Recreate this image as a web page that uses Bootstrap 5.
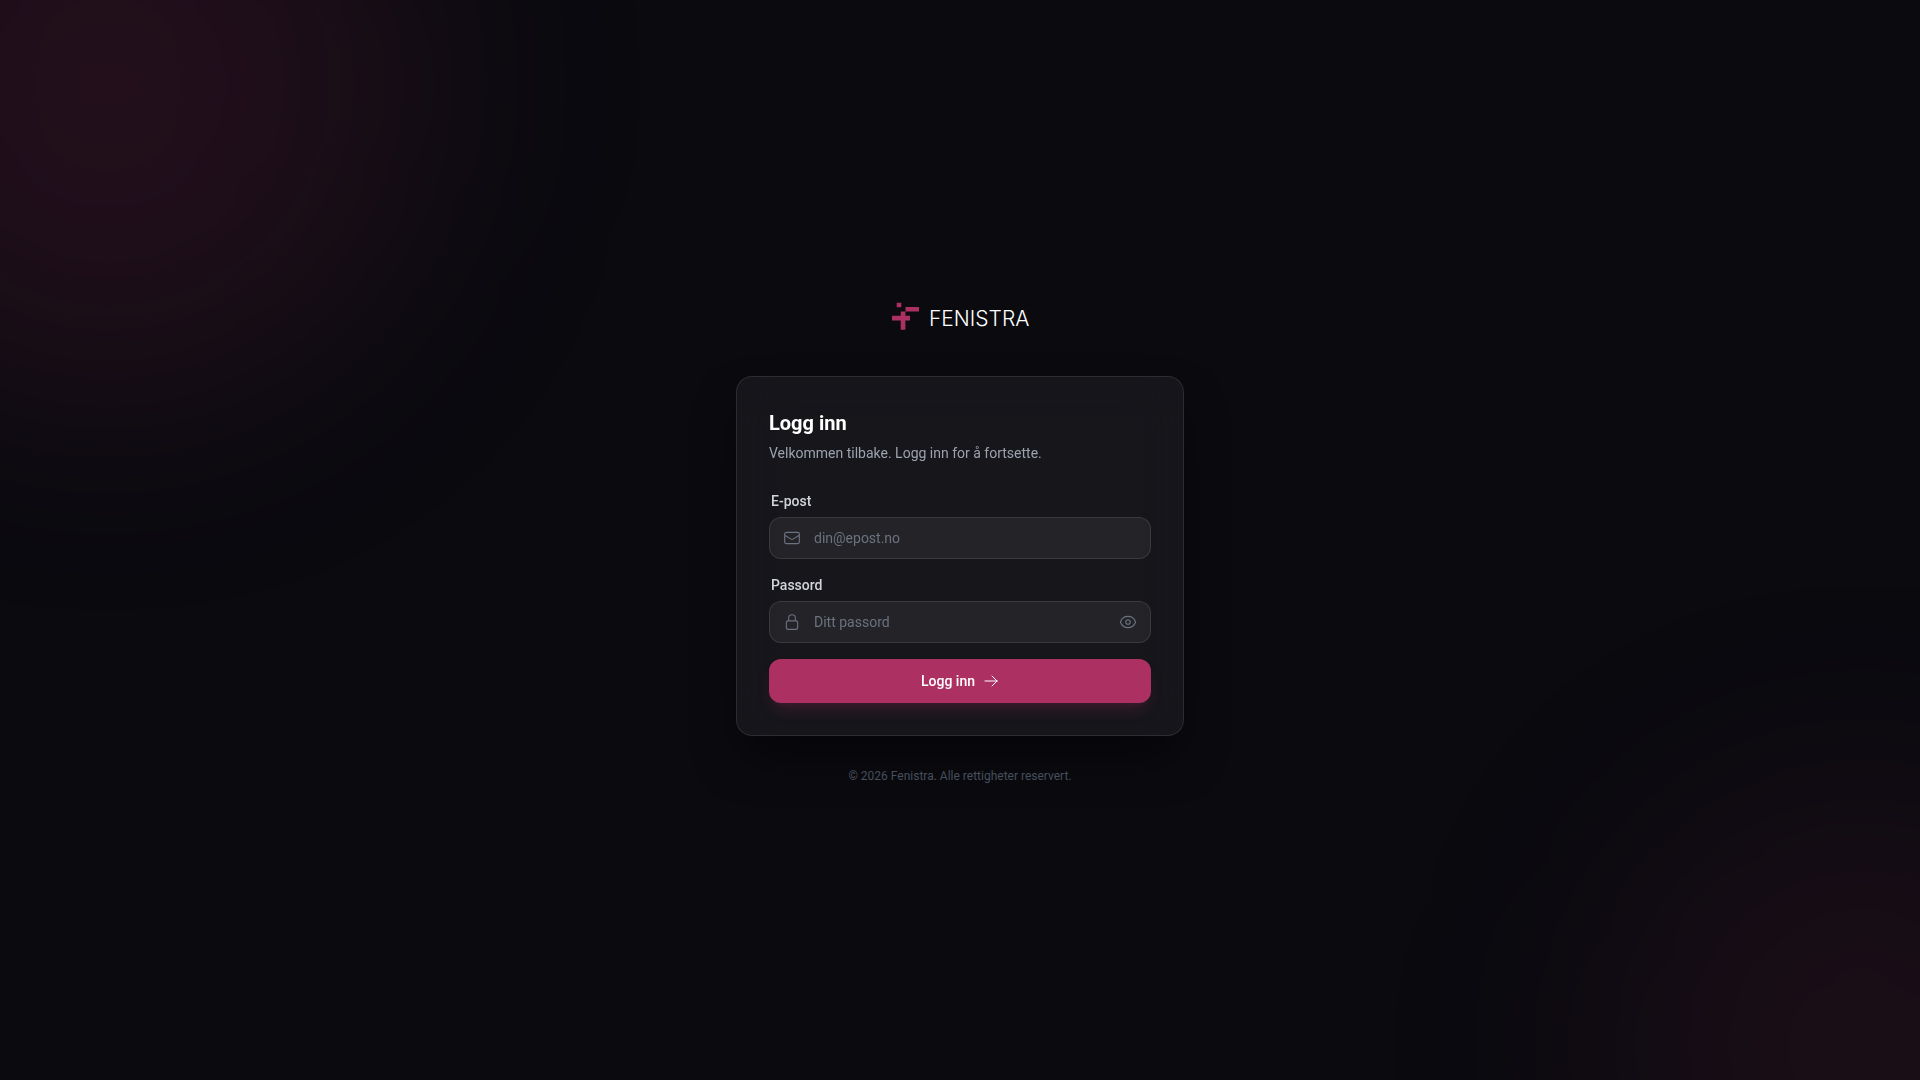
<!DOCTYPE html>
<html lang="no" data-bs-theme="dark">
<head>
<meta charset="utf-8">
<meta name="viewport" content="width=device-width, initial-scale=1">
<title>Fenistra – Logg inn</title>
<link rel="stylesheet" href="https://cdn.jsdelivr.net/npm/bootstrap@5.3.0/dist/css/bootstrap.min.css">
<style>
  body { background: #0a0a0f; font-family: Roboto, "Liberation Sans", sans-serif; font-size: 14px; line-height: 20px; }
  .glow { border-radius: 50%; filter: blur(120px); pointer-events: none; }
  .glow-top { width: 600px; height: 600px; top: -20%; left: -10%; background: rgba(173, 48, 99, .15); }
  .glow-bottom { width: 500px; height: 500px; bottom: -20%; right: -10%; background: rgba(173, 48, 99, .1); }
  .login-column { max-width: 448px; }
  .brand { margin-bottom: 40px; }
  .brand text { font-family: Inter, sans-serif; font-size: 21px; font-weight: 300; fill: #fff; }
  .login-card { background: rgba(255, 255, 255, .05); border: 1px solid rgba(255, 255, 255, .1); border-radius: 16px; padding: 32px; box-shadow: 0 25px 50px -12px rgba(0, 0, 0, .5); backdrop-filter: blur(24px); }
  .login-title { font-size: 20px; line-height: 28px; font-weight: 700; color: #fff; margin-bottom: 6px; }
  .login-intro { color: #9ca3af; margin-bottom: 28px; }
  .login-label { color: #d1d5db; font-weight: 500; margin: 0 2px 6px; }
  .login-input, .login-input:focus { height: 42px; padding: 0 44px; font-size: 14px; line-height: 20px; color: #fff; background: rgba(255, 255, 255, .06); border: 1px solid rgba(255, 255, 255, .1); border-radius: 12px; }
  .login-input::placeholder { color: #6b7280; opacity: 1; }
  .field-icon { left: 14px; color: #6b7280; pointer-events: none; }
  .field-toggle { right: 14px; color: #6b7280; }
  .login-submit, .login-submit:hover { height: 44px; border: 0; border-radius: 12px; background: #ad3063; color: #fff; font-size: 14px; line-height: 20px; font-weight: 500; box-shadow: 0 10px 15px -3px rgba(173, 48, 99, .2), 0 4px 6px -4px rgba(173, 48, 99, .2); }
  .login-footer { margin-top: 32px; font-size: 12px; line-height: 16px; color: #4b5563; }
  svg { display: block; }
</style>
<script defer src="https://cdn.jsdelivr.net/npm/bootstrap@5.3.0/dist/js/bootstrap.bundle.min.js"></script>
</head>
<body>
<main class="position-relative overflow-hidden min-vh-100 d-flex align-items-center justify-content-center">
  <div class="glow glow-top position-absolute"></div>
  <div class="glow glow-bottom position-absolute"></div>
  <div class="login-column position-relative w-100">
    <div class="brand d-flex justify-content-center">
      <svg width="160" height="40" viewBox="0 0 160 40" role="img" aria-label="Fenistra">
        <path fill="#ad3063" d="M16.700 6.800h4.600v4.400h-4.600zM25.500 11h13.500v4.600H25.500zM20.700 15.500h4.700v4.300H30v4.600h-4.600V33.700h-4.700v-9.300H12v-4.600h8.700z"/>
        <text x="49" y="30">FENISTRA</text>
      </svg>
    </div>
    <section class="login-card">
      <h1 class="login-title">Logg inn</h1>
      <p class="login-intro">Velkommen tilbake. Logg inn for å fortsette.</p>
      <form class="d-flex flex-column gap-3">
        <div>
          <label class="login-label d-block" for="email">E-post</label>
          <div class="position-relative d-flex align-items-center">
            <svg class="field-icon position-absolute" width="18" height="18" viewBox="0 0 24 24" fill="none" stroke="currentColor" stroke-width="1.500" stroke-linecap="round" stroke-linejoin="round"><path d="M21.750 6.750v10.500a2.250 2.250 0 0 1-2.250 2.250h-15a2.250 2.250 0 0 1-2.250-2.250V6.750m19.500 0A2.250 2.250 0 0 0 19.500 4.500h-15a2.250 2.250 0 0 0-2.250 2.250m19.500 0v.243a2.250 2.250 0 0 1-1.070 1.916l-7.500 4.615a2.250 2.250 0 0 1-2.360 0L3.320 8.910a2.250 2.250 0 0 1-1.070-1.916V6.750"/></svg>
            <input class="login-input form-control" id="email" type="email" placeholder="din@epost.no">
          </div>
        </div>
        <div>
          <label class="login-label d-block" for="password">Passord</label>
          <div class="position-relative d-flex align-items-center">
            <svg class="field-icon position-absolute" width="18" height="18" viewBox="0 0 24 24" fill="none" stroke="currentColor" stroke-width="1.500" stroke-linecap="round" stroke-linejoin="round"><path d="M16.500 10.500V6.750a4.500 4.500 0 1 0-9 0v3.750m-.750 11.250h10.500a2.250 2.250 0 0 0 2.250-2.250v-6.750a2.250 2.250 0 0 0-2.250-2.250H6.750a2.250 2.250 0 0 0-2.250 2.250v6.750a2.250 2.250 0 0 0 2.250 2.250Z"/></svg>
            <input class="login-input form-control" id="password" type="password" placeholder="Ditt passord">
            <button class="field-toggle position-absolute btn p-0 border-0" type="button" aria-label="Vis passord">
              <svg width="18" height="18" viewBox="0 0 24 24" fill="none" stroke="currentColor" stroke-width="1.500" stroke-linecap="round" stroke-linejoin="round"><path d="M2.036 12.322a1.012 1.012 0 0 1 0-.639C3.423 7.510 7.360 4.500 12 4.500c4.638 0 8.573 3.007 9.963 7.178.070.207.070.431 0 .639C20.577 16.490 16.640 19.500 12 19.500c-4.638 0-8.573-3.007-9.963-7.178Z"/><circle cx="12" cy="12" r="3"/></svg>
            </button>
          </div>
        </div>
        <button class="login-submit btn w-100 d-flex align-items-center justify-content-center gap-2" type="submit">
          Logg inn
          <svg width="16" height="16" viewBox="0 0 24 24" fill="none" stroke="currentColor" stroke-width="1.500" stroke-linecap="round" stroke-linejoin="round"><path d="M13.500 4.500 21 12m0 0-7.500 7.500M21 12H3"/></svg>
        </button>
      </form>
    </section>
    <p class="login-footer text-center mb-0">© 2026 Fenistra. Alle rettigheter reservert.</p>
  </div>
</main>
</body>
</html>
